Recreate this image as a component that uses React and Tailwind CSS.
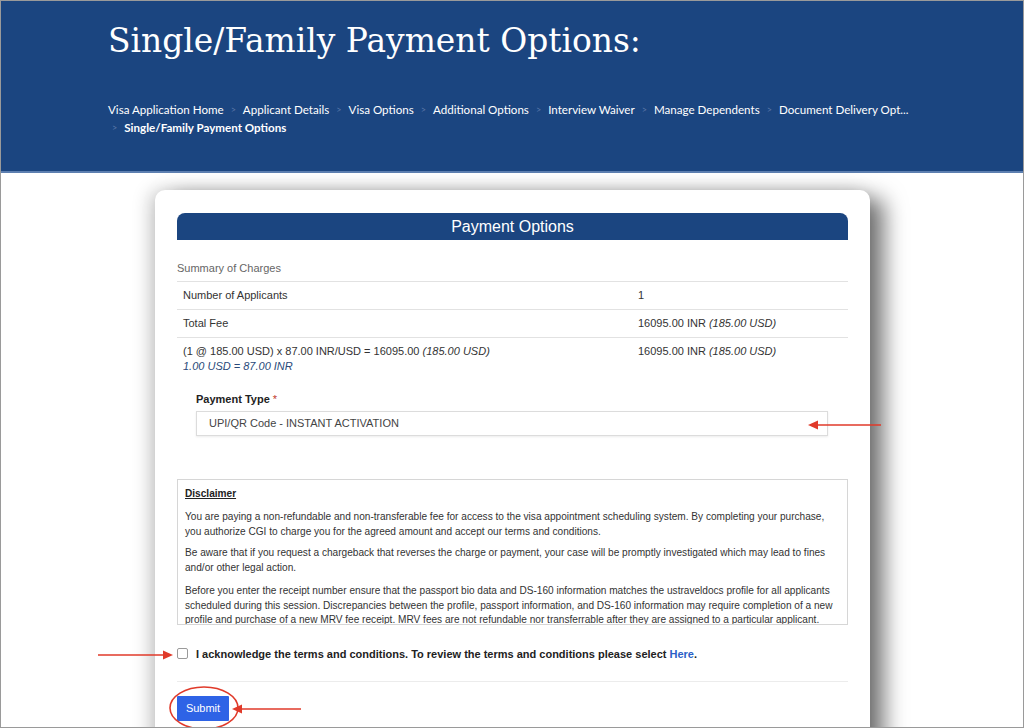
import React from "react";

const crumbs = [
  "Visa Application Home",
  "Applicant Details",
  "Visa Options",
  "Additional Options",
  "Interview Waiver",
  "Manage Dependents",
  "Document Delivery Opt...",
];

function Sep({ first }) {
  return <span className={(first ? "ml-[4px] mr-[7px]" : "mx-[7px]") + " text-[9px] text-[#5a77a8]"}>&gt;</span>;
}

export default function App() {
  return (
    <div className="relative w-[1024px] h-[728px] overflow-hidden bg-white border border-[#9a9a9a]" style={{ fontFamily: '"Liberation Sans", Arial, sans-serif' }}>
      {/* Header */}
      <div className="h-[172px] bg-[#1b4580] border-b-2 border-[#5d7fb0] pl-[107px] pt-[20px]">
        <h1 className="text-white text-[32.9px] leading-[40px]" style={{ fontFamily: '"DejaVu Serif", "Liberation Serif", serif' }}>
          Single/Family Payment Options:
        </h1>
        <div className="mt-[40px] text-white text-[11.6px] leading-[18px]" style={{ fontFamily: 'Lato, "Open Sans", sans-serif' }}>
          <div className="flex items-center">
            {crumbs.map((c, i) => (
              <React.Fragment key={c}>
                {i > 0 && <Sep />}
                <span>{c}</span>
              </React.Fragment>
            ))}
          </div>
          <div className="flex items-center">
            <Sep first />
            <span className="font-bold">Single/Family Payment Options</span>
          </div>
        </div>
      </div>

      {/* Card */}
      <div className="ml-[154px] mt-[17px] w-[715px] h-[600px] bg-white rounded-[10px] shadow-[14px_8px_22px_rgba(0,0,0,0.55),-6px_0_18px_rgba(0,0,0,0.18)] px-[22px] pt-[23px]">
        <div className="h-[27px] bg-[#1b4580] rounded-t-[8px] flex items-center justify-center text-white text-[16px]">
          Payment Options
        </div>

        <div className="text-[11px] text-[#666] pt-[20px] pb-[4px]">Summary of Charges</div>
        <div className="text-[11px] text-[#333]">
          <div className="flex border-t border-[#e2e2e2] h-[28px] items-center px-[6px]">
            <div className="w-[455px]">Number of Applicants</div>
            <div>1</div>
          </div>
          <div className="flex border-t border-[#e2e2e2] h-[28px] items-center px-[6px]">
            <div className="w-[455px]">Total Fee</div>
            <div>16095.00 INR <i>(185.00 USD)</i></div>
          </div>
          <div className="flex border-t border-[#e2e2e2] pt-[6px] px-[6px] leading-[15px]">
            <div className="w-[455px]">
              <div>(1 @ 185.00 USD) x 87.00 INR/USD = 16095.00 <i>(185.00 USD)</i></div>
              <div className="italic text-[#2a4a7a]">1.00 USD = 87.00 INR</div>
            </div>
            <div>16095.00 INR <i>(185.00 USD)</i></div>
          </div>
        </div>

        <div className="pl-[19px] pr-[20px] mt-[18px]">
          <div className="text-[11px] font-bold text-[#222] leading-[14px]">
            Payment Type <span className="text-[#c0392b] font-normal">*</span>
          </div>
          <div className="mt-[5px] h-[25px] border border-[#dcdcdc] shadow-[0_1px_2px_rgba(0,0,0,0.08)] flex items-center pl-[12px] text-[11px] text-[#444]">
            UPI/QR Code - INSTANT ACTIVATION
          </div>
        </div>

        <div className="mt-[43px] h-[146px] overflow-hidden border border-[#d6d6d6] px-[7px] pt-[7px] text-[10.1px] leading-[14.5px] text-[#333]">
          <div className="font-bold underline text-[#222]">Disclaimer</div>
          <p className="mt-[9px]">
            You are paying a non-refundable and non-transferable fee for access to the visa appointment scheduling system. By completing your purchase, you authorize CGI to charge you for the agreed amount and accept our terms and conditions.
          </p>
          <p className="mt-[7px]">
            Be aware that if you request a chargeback that reverses the charge or payment, your case will be promptly investigated which may lead to fines and/or other legal action.
          </p>
          <p className="mt-[9px]">
            Before you enter the receipt number ensure that the passport bio data and DS-160 information matches the ustraveldocs profile for all applicants scheduled during this session. Discrepancies between the profile, passport information, and DS-160 information may require completion of a new profile and purchase of a new MRV fee receipt. MRV fees are not refundable nor transferrable after they are assigned to a particular applicant.
          </p>
        </div>

        <div className="mt-[21px] flex items-center text-[11px] font-bold text-[#222]">
          <span className="w-[11px] h-[11px] border border-[#9a9a9a] rounded-[2px] bg-white mr-[8px]"></span>
          <span>
            I acknowledge the terms and conditions. To review the terms and conditions please select <span className="text-[#2b5fc7]">Here</span>.
          </span>
        </div>

        <div className="mt-[19px] border-t border-[#ececec]"></div>

        <div className="mt-[13px]">
          <button className="w-[52px] h-[25px] bg-[#2e63e6] text-white text-[11px] rounded-[1px]">Submit</button>
        </div>
      </div>

      {/* Annotations */}
      <svg className="absolute left-0 top-0" width="1024" height="728" viewBox="0 0 1024 728">
        <g stroke="#e03a2a" strokeWidth="1.6" fill="none">
          <line x1="880" y1="424" x2="814" y2="424" />
          <line x1="97" y1="654" x2="165" y2="654" />
          <line x1="300" y1="708" x2="238" y2="708" />
          <ellipse cx="203" cy="707" rx="34" ry="21" />
        </g>
        <g fill="#e03a2a">
          <polygon points="807,424 817,419.5 817,428.5" />
          <polygon points="172,654 162,649.5 162,658.5" />
          <polygon points="231,708 241,703.5 241,712.5" />
        </g>
      </svg>
    </div>
  );
}
